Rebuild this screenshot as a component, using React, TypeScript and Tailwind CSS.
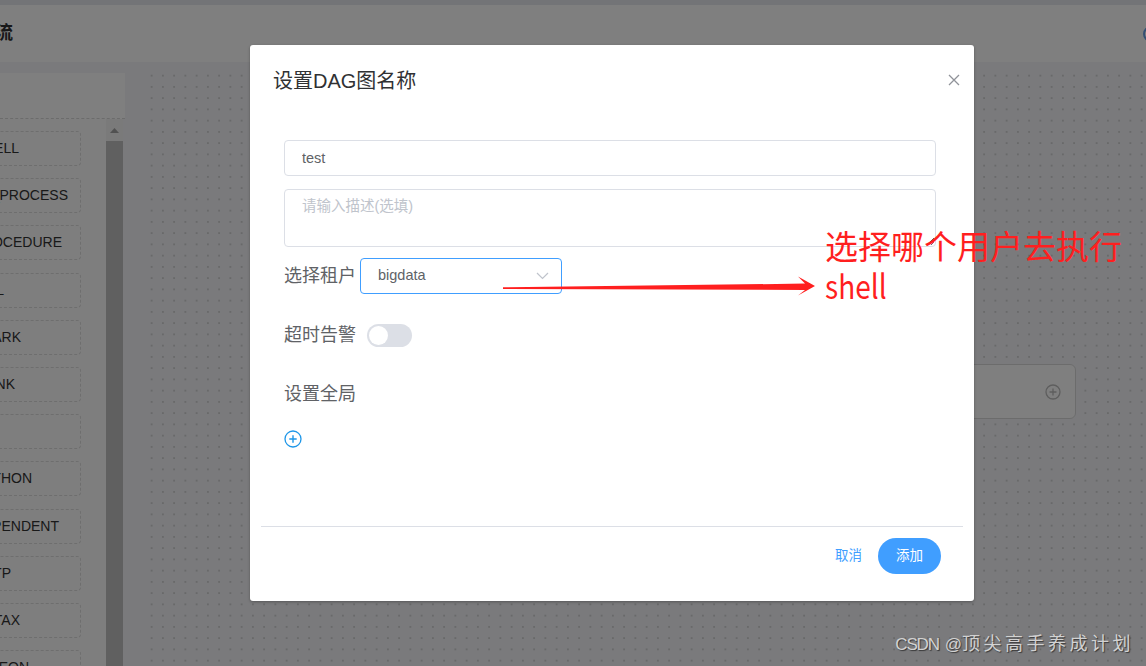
import React from "react";

const items: { label: string; pr: string }[] = [
  { label: "SHELL", pr: "pr-[61px]" },
  { label: "SUB_PROCESS", pr: "pr-[12px]" },
  { label: "PROCEDURE", pr: "pr-[18px]" },
  { label: "SQL", pr: "pr-[76px]" },
  { label: "SPARK", pr: "pr-[59px]" },
  { label: "FLINK", pr: "pr-[65px]" },
  { label: "MR", pr: "pr-[95px]" },
  { label: "PYTHON", pr: "pr-[48px]" },
  { label: "DEPENDENT", pr: "pr-[21px]" },
  { label: "HTTP", pr: "pr-[69px]" },
  { label: "DATAX", pr: "pr-[60px]" },
  { label: "PIGEON", pr: "pr-[51px]" },
];

export default function App() {
  return (
    <div className="relative h-[666px] w-[1146px] overflow-hidden font-['Liberation_Sans','Noto_Sans_CJK_SC',sans-serif]">
      {/* underlying page */}
      <div className="flex h-full flex-col bg-[#f4f5f9]">
        <div className="h-[5px] shrink-0 bg-[#e6e8ee]" />
        <div className="flex h-[57px] shrink-0 items-center justify-between bg-white">
          <div className="ml-[-41px] whitespace-nowrap text-[18px] font-bold text-[#303133]">工作流</div>
          <div className="mr-[-13px] h-[16px] w-[16px] rounded-full border-2 border-[#6a9ee8]" />
        </div>
        <div className="flex min-h-0 flex-1">
          {/* sidebar */}
          <div className="flex w-[125px] shrink-0 flex-col pt-[11px]">
            <div className="h-[46px] w-[125px] shrink-0 border-b border-dashed border-[#d8d8d8] bg-white" />
            <div className="flex min-h-0 w-[123px] flex-1">
              <div className="flex flex-1 flex-col gap-[12.2px] overflow-hidden bg-[#fcfcfc] pt-[12px]">
                {items.map((it) => (
                  <div
                    key={it.label}
                    className={`ml-[-119px] flex h-[35px] w-[200px] shrink-0 items-center justify-end whitespace-nowrap rounded-[4px] border border-dashed border-[#dcdcdc] text-[14px] text-[#333] ${it.pr}`}
                  >
                    {it.label}
                  </div>
                ))}
              </div>
              <div className="flex w-[17px] flex-col bg-[#f4f4f4]">
                <div className="flex h-[22px] items-center justify-center">
                  <svg width="9" height="5" viewBox="0 0 9 5">
                    <polygon points="0,5 4.5,0 9,5" fill="#a3a3a3" />
                  </svg>
                </div>
                <div className="flex-1 bg-[#c0c0c0]" />
              </div>
            </div>
          </div>
          {/* canvas */}
          <div className="relative flex min-w-0 flex-1 flex-col">
            <div className="relative ml-[21px] mt-[8px] flex-1 bg-[radial-gradient(circle,#cdcdcd_0.6px,transparent_1px)] bg-[length:11.25px_11.25px]">
              <div className="absolute left-[730px] top-[294px] flex h-[55px] w-[200px] items-center justify-end rounded-[6px] border border-[#d9d9d9] bg-white pr-[14px]">
                <svg width="16" height="16" viewBox="0 0 16 16">
                  <circle cx="8" cy="8" r="7" fill="none" stroke="#bcbcbc" strokeWidth="1.3" />
                  <path d="M8 4.5v7M4.5 8h7" stroke="#bcbcbc" strokeWidth="1.3" />
                </svg>
              </div>
            </div>
          </div>
        </div>
      </div>

      {/* overlay + dialog */}
      <div className="absolute inset-0 bg-black/50 pl-[250px] pt-[45px]">
        <div className="flex h-[556px] w-[724px] flex-col rounded-[3px] bg-white shadow-[0_1px_3px_rgba(0,0,0,0.3)]">
          <div className="flex items-start justify-between pl-[23px] pr-[14px] pt-[21px]">
            <div className="text-[20px] leading-[30px] text-[#303133]">设置DAG图名称</div>
            <svg className="mt-[8px]" width="12" height="12" viewBox="0 0 12 12">
              <path d="M1 1L11 11M11 1L1 11" stroke="#909399" strokeWidth="1.3" />
            </svg>
          </div>
          <div className="flex flex-1 flex-col pl-[34px] pr-[38px] pt-[44px]">
            <input
              readOnly
              value="test"
              className="h-[36px] w-full rounded-[4px] border border-[#dcdfe6] px-[17px] text-[14.5px] text-[#606266] outline-none"
            />
            <textarea
              placeholder="请输入描述(选填)"
              className="mt-[13px] h-[58px] w-full resize-y rounded-[4px] border border-[#dcdfe6] px-[17px] pb-[5px] pt-[6px] text-[14.5px] leading-[1.5] text-[#606266] outline-none placeholder:text-[#c0c4cc]"
            />
            <div className="mt-[11px] flex h-[36px] items-center">
              <div className="w-[72px] text-[18px] text-[#606266]">选择租户</div>
              <div className="ml-[4px] flex h-[36px] w-[202px] items-center justify-between rounded-[4px] border border-[#409eff] pl-[17px] pr-[12px]">
                <span className="text-[14.5px] text-[#606266]">bigdata</span>
                <svg width="13" height="8" viewBox="0 0 13 8">
                  <polyline points="1,1 6.5,6.5 12,1" fill="none" stroke="#c0c4cc" strokeWidth="1.2" />
                </svg>
              </div>
            </div>
            <div className="mt-[23px] flex h-[36px] items-center">
              <div className="w-[72px] text-[18px] text-[#606266]">超时告警</div>
              <div className="ml-[11px] flex h-[23px] w-[45px] items-center rounded-full bg-[#dcdfe6] pl-[2px]">
                <div className="h-[19px] w-[19px] rounded-full bg-white" />
              </div>
            </div>
            <div className="mt-[23px] flex h-[36px] items-center">
              <div className="text-[18px] text-[#606266]">设置全局</div>
            </div>
            <div className="mt-[18px] flex">
              <svg width="18" height="18" viewBox="0 0 18 18">
                <circle cx="9" cy="9" r="8" fill="none" stroke="#1d96e8" strokeWidth="1.3" />
                <path d="M9 5.3v7.4M5.3 9h7.4" stroke="#1d96e8" strokeWidth="1.4" />
              </svg>
            </div>
          </div>
          <div className="mx-[11px] border-t border-[#dcdfe6]" />
          <div className="flex items-center justify-end pb-[27px] pr-[33px] pt-[11px]">
            <span className="text-[13.5px] text-[#409eff]">取消</span>
            <button className="ml-[16px] h-[36px] w-[63px] rounded-full bg-[#409eff] text-[13.5px] text-white">添加</button>
          </div>
        </div>
      </div>

      {/* red annotations */}
      <svg className="pointer-events-none absolute left-0 top-0" width="1146" height="666">
        <polygon
          points="503,287.3 805,283.6 798,276.5 815,286 798,295.5 805,290 503,288.9"
          fill="#ff1f1f"
        />
      </svg>
      <div className="absolute left-[825px] top-[225px] font-['Noto_Sans_CJK_SC',sans-serif] text-[33px] leading-[40px] text-[#ff1f1f]">
        <div className="whitespace-nowrap">选择哪个用户去执行</div>
        <div className="origin-left scale-x-[0.85]">shell</div>
      </div>

      {/* watermark */}
      <div className="absolute bottom-[8px] right-[12px] flex items-baseline whitespace-nowrap text-[18px] text-[#d2d2d2] [text-shadow:1px_1px_1px_rgba(0,0,0,0.55)]">
        <span className="text-[17px] tracking-[-1.2px]">CSDN</span>
        <span className="ml-[6px] text-[17px]">@</span>
        <span className="tracking-[3.5px]">顶尖高手养成计划</span>
      </div>
    </div>
  );
}
